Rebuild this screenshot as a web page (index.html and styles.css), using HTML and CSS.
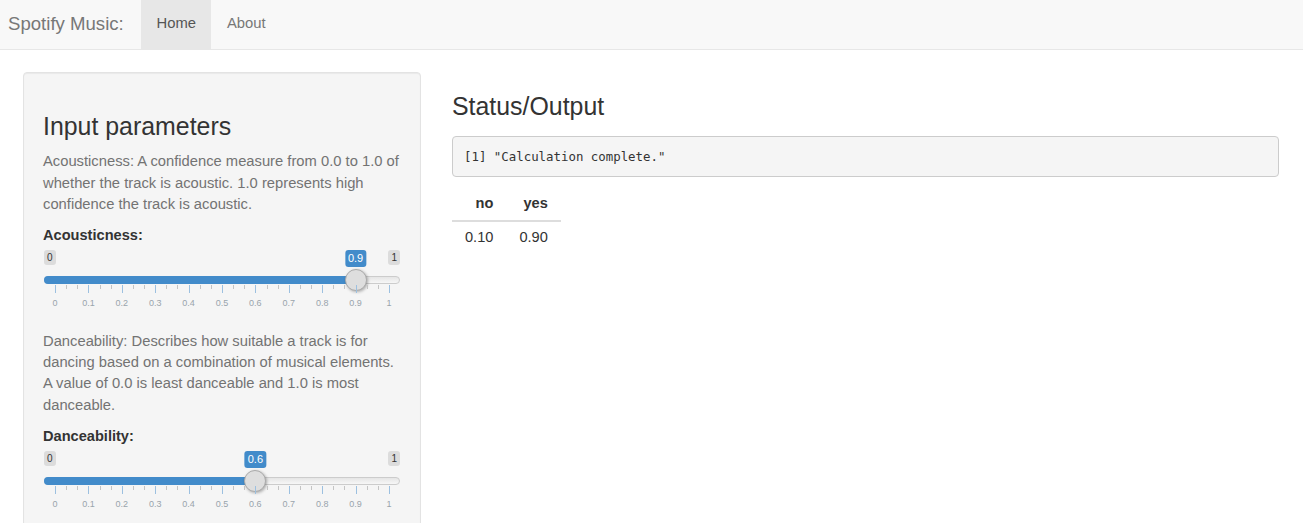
FILE: index.html
```html
<!DOCTYPE html>
<html lang="en">
<head>
<meta charset="utf-8">
<title>Spotify Music</title>
<link rel="stylesheet" href="styles.css">
</head>
<body>
<nav class="navbar">
  <span class="brand">Spotify Music:</span>
  <ul class="nav">
    <li class="nav-item active"><a class="nav-link">Home</a></li>
    <li class="nav-item"><a class="nav-link">About</a></li>
  </ul>
</nav>
<div class="layout">
  <aside class="well">
    <h3 class="well-title">Input parameters</h3>
    <p class="help">Acousticness: A confidence measure from 0.0 to 1.0 of whether the track is acoustic. 1.0 represents high confidence the track is acoustic.</p>
    <div class="form-group">
      <label class="control-label">Acousticness:</label>
      <div class="irs" style="--v: 0.9">
        <span class="irs-min">0</span>
        <span class="irs-max">1</span>
        <span class="irs-line"></span>
        <span class="irs-bar"></span>
        <span class="irs-single">0.9</span>
        <span class="irs-slider"></span>
        <span class="irs-ticks"></span>
        <div class="irs-labels">
          <span class="irs-lab">0</span><span class="irs-lab">0.1</span><span class="irs-lab">0.2</span><span class="irs-lab">0.3</span><span class="irs-lab">0.4</span><span class="irs-lab">0.5</span><span class="irs-lab">0.6</span><span class="irs-lab">0.7</span><span class="irs-lab">0.8</span><span class="irs-lab">0.9</span><span class="irs-lab">1</span>
        </div>
      </div>
    </div>
    <p class="help">Danceability: Describes how suitable a track is for dancing based on a combination of musical elements. A value of 0.0 is least danceable and 1.0 is most danceable.</p>
    <div class="form-group">
      <label class="control-label">Danceability:</label>
      <div class="irs" style="--v: 0.6">
        <span class="irs-min">0</span>
        <span class="irs-max">1</span>
        <span class="irs-line"></span>
        <span class="irs-bar"></span>
        <span class="irs-single">0.6</span>
        <span class="irs-slider"></span>
        <span class="irs-ticks"></span>
        <div class="irs-labels">
          <span class="irs-lab">0</span><span class="irs-lab">0.1</span><span class="irs-lab">0.2</span><span class="irs-lab">0.3</span><span class="irs-lab">0.4</span><span class="irs-lab">0.5</span><span class="irs-lab">0.6</span><span class="irs-lab">0.7</span><span class="irs-lab">0.8</span><span class="irs-lab">0.9</span><span class="irs-lab">1</span>
        </div>
      </div>
    </div>
  </aside>
  <main class="main">
    <h3 class="out-title">Status/Output</h3>
    <pre class="out">[1] "Calculation complete."</pre>
    <table class="result">
      <thead>
        <tr><th>no</th><th>yes</th></tr>
      </thead>
      <tbody>
        <tr><td>0.10</td><td>0.90</td></tr>
      </tbody>
    </table>
  </main>
</div>
</body>
</html>
```

FILE: styles.css
```css
* { box-sizing: border-box; }

html, body {
  margin: 0;
  padding: 0;
  background: #fff;
}

body {
  font-family: "Liberation Sans", Arial, Helvetica, sans-serif;
  font-size: 14px;
  line-height: 20px;
  color: #333;
}

/* ---------- navbar ---------- */
.navbar {
  display: flex;
  height: 50px;
  background: #f8f8f8;
  border-bottom: 1px solid #e7e7e7;
}

.brand {
  width: 141px;
  padding: 14px 0 0 8px;
  font-size: 18.6px;
  line-height: 20px;
  color: #777;
}

.nav {
  display: flex;
  margin: 0;
  padding: 0;
  list-style: none;
}

.nav-link {
  display: block;
  height: 49px;
  padding: 13px 15.5px 16px;
  font-size: 14.8px;
  line-height: 20px;
  color: #777;
}

.nav-item.active .nav-link {
  background: #e7e7e7;
  color: #555;
}

/* ---------- layout ---------- */
.layout {
  display: grid;
  grid-template-columns: 398px 1fr;
  column-gap: 31px;
  align-items: start;
  padding: 22px 24px 0 23px;
}

.well {
  padding: 19px 19px 19px;
  background: #f5f5f5;
  border: 1px solid #e3e3e3;
  border-radius: 4px;
  box-shadow: inset 0 1px 1px rgba(0, 0, 0, 0.05);
}

.well-title {
  margin: 21px 0 12px;
  font-size: 24.9px;
  font-weight: 500;
  line-height: 26.4px;
  color: #333;
}

.help {
  margin: 0 0 10px;
  font-size: 14.75px;
  line-height: 21.2px;
  color: #737373;
}

.form-group {
  margin-bottom: 15px;
}

.control-label {
  display: block;
  margin-bottom: 5px;
  font-size: 14.6px;
  font-weight: 700;
  line-height: 20px;
  color: #333;
}

/* ---------- range slider ---------- */
.irs {
  --pos: calc((100% - 22px) * var(--v));
  position: relative;
  height: 66px;
  margin: 5px 1px 0;
}

.irs-min,
.irs-max {
  position: absolute;
  top: 0;
  padding: 1px 3px;
  font-size: 10px;
  line-height: 13px;
  color: #333;
  background: rgba(0, 0, 0, 0.1);
  border-radius: 3px;
}

.irs-min { left: 0; }
.irs-max { right: 0; }

.irs-line {
  position: absolute;
  top: 26px;
  left: 0;
  right: 0;
  height: 8px;
  border: 1px solid #cccccc;
  border-radius: 16px;
  background: linear-gradient(to bottom, #dddddd -50%, #ffffff 150%);
}

.irs-bar {
  position: absolute;
  top: 26px;
  left: 0;
  width: calc(var(--pos) + 11px);
  height: 8px;
  background: #428bca;
  border-radius: 16px 0 0 16px;
}

.irs-single {
  position: absolute;
  top: 0;
  left: calc(var(--pos) + 11px);
  transform: translateX(-50%);
  padding: 1px 3px;
  font-size: 11px;
  line-height: 14.7px;
  color: #fff;
  background: #428bca;
  border-radius: 3px;
}

.irs-slider {
  position: absolute;
  top: 19px;
  left: var(--pos);
  width: 22px;
  height: 22px;
  background: #dedede;
  border: 1px solid #ababab;
  border-radius: 50%;
  box-shadow: 1px 1px 3px rgba(0, 0, 0, 0.3);
}

.irs-ticks {
  --step: calc((100% - 1px) / 10);
  position: absolute;
  top: 35px;
  left: 11px;
  right: 10px;
  height: 8px;
  background:
    repeating-linear-gradient(to right, #9cc0e0 0, #9cc0e0 1px, transparent 1px, transparent var(--step)),
    repeating-linear-gradient(to right, #c4c4c4 0, #c4c4c4 1px, transparent 1px, transparent calc(var(--step) / 3)) top left / 100% 4px no-repeat;
}

.irs-labels {
  position: absolute;
  top: 48px;
  left: 11px;
  right: 11px;
  display: flex;
  justify-content: space-between;
}

.irs-lab {
  display: flex;
  justify-content: center;
  width: 0;
  font-size: 9px;
  line-height: 11px;
  color: #99a4ac;
  white-space: nowrap;
}

/* ---------- output ---------- */
.out-title {
  margin: 21px 0 17px;
  font-size: 24.9px;
  font-weight: 500;
  line-height: 26.4px;
  color: #333;
}

.out {
  margin: 0 0 11px;
  padding: 9.5px 9.5px 9.5px 11px;
  font-family: "DejaVu Sans Mono", "Liberation Mono", monospace;
  font-size: 12.4px;
  line-height: 20px;
  color: #333;
  background: #f5f5f5;
  border: 1px solid #ccc;
  border-radius: 4px;
  white-space: pre;
}

.result {
  border-collapse: collapse;
  border-spacing: 0;
}

.result th,
.result td {
  padding: 5px 13px;
  text-align: right;
  font-size: 14.6px;
  line-height: 20px;
}

.result th {
  padding-bottom: 7px;
  font-weight: 700;
  border-bottom: 2px solid #ddd;
}
```
